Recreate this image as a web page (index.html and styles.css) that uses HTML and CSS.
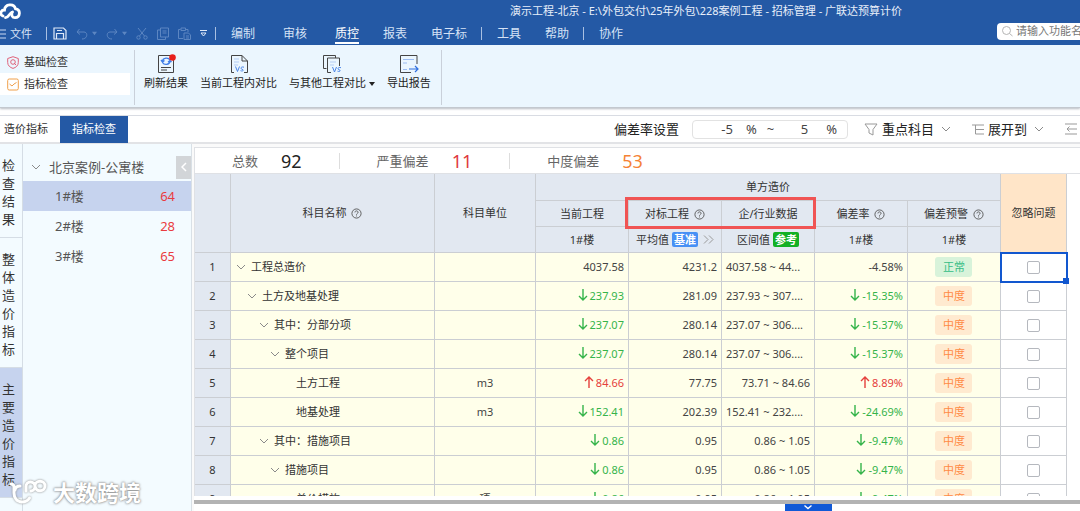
FILE: index.html
```html
<!DOCTYPE html>
<html lang="zh-CN">
<head>
    <meta charset="UTF-8">
    <meta name="viewport" content="width=device-width, initial-scale=1.0">
    <title>广联达预算计价</title>
    <link rel="stylesheet" href="styles.css">
</head>
<body>

    <svg class="sprite" aria-hidden="true">
        <symbol id="chevron" viewBox="0 0 10 10"><path d="M1 3l4 4 4-4" fill="none" stroke="currentColor"/></symbol>
        <symbol id="caret" viewBox="0 0 6 6"><path d="M0 1h6L3 5z" fill="currentColor"/></symbol>
        <symbol id="down" viewBox="0 0 10 12"><path d="M5 0v11M1 7l4 4 4-4" fill="none" stroke="currentColor" stroke-width="1.4"/></symbol>
        <symbol id="up" viewBox="0 0 10 12"><path d="M5 12V1M1 5l4-4 4 4" fill="none" stroke="currentColor" stroke-width="1.4"/></symbol>
        <symbol id="help" viewBox="0 0 12 12"><g fill="none" stroke="currentColor"><circle cx="6" cy="6" r="5"/><path d="M4.3 4.8c0-2.2 3.4-2.2 3.4 0C7.7 6 6 6 6 7.3M6 8.2v1"/></g></symbol>
    </svg>

    <div class="app">
        <header class="header">
            <svg class="logo" viewBox="0 0 22 17"><g fill="none" stroke="#fff" stroke-width="2.8" stroke-linecap="round"><path d="M3 13C-.5 11.500.5 7 4.500 7 5 .8 14 0 15.500 5.800c5.500.7 5 8.700-.5 8.900-3 0-3.500-2.200-3-5.200"/><path d="M5.500 14.700c3.500 0 3.500-4.700 7-5.700"/></g></svg>
            <div class="title">演示工程-北京 - E:\外包交付\25年外包\228案例工程 - 招标管理 - 广联达预算计价</div>
            <nav class="menu">
                <button class="file">
                    <svg width="7" height="10" viewBox="0 0 7 10"><path d="M0 1h6M0 5h6M0 9h6" stroke="#c9d9f2"/></svg>文件
                </button>
                <span class="sep"></span>
                <div class="quick">
                    <button class="on" aria-label="保存"><svg width="14" height="13" viewBox="0 0 14 13"><g fill="none" stroke="currentColor" stroke-width="1.200"><path d="M1 1h9.500L13 3.500V12H1zM3.500 12V6.500h7V12M4 3.500h5"/></g></svg></button>
                    <button aria-label="撤销"><svg width="12" height="12" viewBox="0 0 12 12"><path d="M3.500 1L1 4l3 2.500M1.500 4H8c4 0 4 7-2 7" fill="none" stroke="currentColor"/></svg><svg class="tri" width="5" height="5"><use href="#caret"/></svg></button>
                    <button aria-label="恢复"><svg width="12" height="12" viewBox="0 0 12 12"><path d="M8.500 1L11 4 8 6.500M10.500 4H4c-4 0-4 7 2 7" fill="none" stroke="currentColor"/></svg><svg class="tri" width="5" height="5"><use href="#caret"/></svg></button>
                    <button aria-label="剪切"><svg width="12" height="13" viewBox="0 0 12 13"><g fill="none" stroke="currentColor"><path d="M2 1l6.500 8M10 1L3.500 9"/><circle cx="2.500" cy="10.500" r="1.700"/><circle cx="9.500" cy="10.500" r="1.700"/></g></svg></button>
                    <button aria-label="复制"><svg width="12" height="13" viewBox="0 0 12 13"><path d="M3.500 1h8v9h-8zM3.500 3h-3v9.500h8V10M5.500 4h4M5.500 6h4" fill="none" stroke="currentColor"/></svg></button>
                    <button aria-label="粘贴"><svg width="13" height="13" viewBox="0 0 13 13"><path d="M5 11.500H.5v-9h2M8 2.500h2V5M3 1h4.500v2.500H3zM6 6h4.500L12.500 8v4.500H6zM8 9h3M8 11h3" fill="none" stroke="currentColor"/></svg></button>
                    <button class="on" aria-label="更多"><svg width="7" height="7" viewBox="0 0 7 7"><path d="M0 .5h7M1 3h5L3.500 6z" fill="none" stroke="currentColor"/></svg></button>
                </div>
                <span class="sep"></span>
                <div class="links">
                    <a href="#">编制</a>
                    <a href="#">审核</a>
                    <a href="#" class="current">质控</a>
                </div>
                <div class="links close">
                    <a href="#">报表</a>
                    <a href="#">电子标</a>
                </div>
                <span class="sep"></span>
                <div class="links close">
                    <a href="#">工具</a>
                    <a href="#">帮助</a>
                </div>
                <span class="sep"></span>
                <a href="#">协作</a>
                <label class="search">
                    <svg width="11" height="11" viewBox="0 0 11 11"><g fill="none" stroke="#b5b5b5"><circle cx="4.500" cy="4.500" r="4"/><path d="M7.500 7.500L10.500 10"/></g></svg>
                    <input type="text" placeholder="请输入功能名称" aria-label="搜索功能">
                </label>
            </nav>
        </header>

        <section class="ribbon">
            <div class="checks">
                <button>
                    <svg width="12" height="13" viewBox="0 0 12 13"><g fill="none" stroke="#e0627a"><path d="M6 .7l5.300 1.800v4C11.300 9.500 9 11.500 6 12.400 3 11.500.7 9.500.7 6.500v-4z"/><circle cx="6" cy="6" r="2.300"/><path d="M7 7l2 2"/></g></svg>基础检查
                </button>
                <button class="selected">
                    <svg width="12" height="13" viewBox="0 0 12 13"><g fill="none" stroke="#f0a04b"><rect x=".7" y="1" width="10.600" height="11" rx="1.500"/><path d="M2.500 6L5 8l2-2 2.500-1.500"/></g></svg>指标检查
                </button>
            </div>
            <div class="tools">
                <button>
                    <svg width="20" height="20" viewBox="0 0 20 20"><path d="M2.500 1.500h15v17h-15zM5 13.500h10M5 16h6" fill="none" stroke="#444"/><path d="M6.500 7a4 3.500 0 0 1 7.500-1M14 7.500a4 3.500 0 0 1-7.500 1M5 6l1.500 2L8.500 6.500M12 8l2-1.500L15.500 8" fill="none" stroke="#3f7de8" stroke-width="1.300"/><circle cx="16.500" cy="3.500" r="3.300" fill="#e8201c"/></svg>
                    <span>刷新结果</span>
                </button>
                <button>
                    <svg width="20" height="20" viewBox="0 0 20 20"><path d="M5 18.500H2.500v-17H13L18.500 7v11.500H15M13 1.500V7h5.500" fill="none" stroke="#444"/><path d="M5 5h5M5 8h5M5 11h4" stroke="#b4cdf5"/><path d="M6.500 12.500l2 5 2-5M15 13.200c-3-1-4 1.500-2 2s1.500 2.500-1.500 1.500" fill="none" stroke="#4c86e8"/></svg>
                    <span>当前工程内对比</span>
                </button>
                <button>
                    <svg width="20" height="20" viewBox="0 0 20 20"><path d="M4.500 14.500H1.500v-13h12V4M9 18.500H5.500V4h12v8" fill="none" stroke="#444"/><path d="M8 8h6M8 11h4" stroke="#b4cdf5"/><path d="M10.500 13l2 5 2-5M19 13.700c-3-1-4 1.500-2 2s1.500 2.500-1.500 1.500" fill="none" stroke="#4c86e8"/></svg>
                    <span>与其他工程对比 <svg width="6" height="6"><use href="#caret"/></svg></span>
                </button>
                <button>
                    <svg width="20" height="20" viewBox="0 0 20 20"><path d="M18 10V1.500H1.500v17H12" fill="none" stroke="#444"/><path d="M4 5.500h11M4 9h4M4 15.500h4" stroke="#9cbcf2"/><path d="M10 15h9M16 12l3 3-3 3" fill="none" stroke="#2f6fe0" stroke-width="1.200"/></svg>
                    <span>导出报告</span>
                </button>
            </div>
        </section>

        <section class="toolbar">
            <button class="tab">造价指标</button>
            <button class="tab active">指标检查</button>
            <div class="filters">
                <span>偏差率设置</span>
                <div class="range">
                    <input type="text" value="-5" aria-label="偏差率下限"><span>%</span>
                    <span class="tilde">~</span>
                    <input type="text" value="5" aria-label="偏差率上限"><span>%</span>
                </div>
                <button>
                    <svg width="14" height="13" viewBox="0 0 14 13"><path d="M1 1h12L9 6.500V12L5 10V6.500z" fill="none" stroke="#999"/></svg>
                    重点科目
                    <svg class="arrow" width="10" height="10"><use href="#chevron"/></svg>
                </button>
                <button>
                    <svg width="12" height="11" viewBox="0 0 12 11"><path d="M0 1h12M3.500 1v9H12M3.500 5.500H12" fill="none" stroke="#999"/></svg>
                    展开到
                    <svg class="arrow" width="10" height="10"><use href="#chevron"/></svg>
                </button>
                <button aria-label="收起"><svg width="12" height="12" viewBox="0 0 12 12"><path d="M0 1h12M2 6h10M0 11h12M4.500 3.500L2 6l2.500 2.500" fill="none" stroke="#999"/></svg></button>
            </div>
        </section>

        <main class="workspace">
            <nav class="side-tabs">
                <button>检查结果</button>
                <button>整体造价指标</button>
                <button class="active">主要造价指标</button>
            </nav>

            <aside class="tree">
                <div class="tree-head">
                    <svg class="arrow" width="10" height="10"><use href="#chevron"/></svg>
                    <span>北京案例-公寓楼</span>
                    <button class="collapse" aria-label="收起"><svg width="6" height="10" viewBox="0 0 6 10"><path d="M5 1L1 5l4 4" fill="none" stroke="#fff" stroke-width="1.500"/></svg></button>
                </div>
                <a href="#" class="building active"><span>1#楼</span><b>64</b></a>
                <a href="#" class="building"><span>2#楼</span><b>28</b></a>
                <a href="#" class="building"><span>3#楼</span><b>65</b></a>
            </aside>

            <section class="content">
                <div class="summary">
                    <div>总数 <b>92</b></div>
                    <div>严重偏差 <b class="red">11</b></div>
                    <div>中度偏差 <b class="orange">53</b></div>
                </div>

                <div class="grid">
                    <table>
                        <colgroup>
                            <col class="c-no"><col><col class="c-unit">
                            <col class="c-val"><col class="c-val"><col class="c-val"><col class="c-val"><col class="c-val">
                            <col class="c-skip">
                        </colgroup>
                        <thead>
                            <tr class="group">
                                <th rowspan="3"></th>
                                <th rowspan="3">科目名称 <svg class="help"><use href="#help"/></svg></th>
                                <th rowspan="3">科目单位</th>
                                <th colspan="5">单方造价</th>
                                <th rowspan="3" class="skip">忽略问题</th>
                            </tr>
                            <tr>
                                <th>当前工程</th>
                                <th class="marked">对标工程 <svg class="help"><use href="#help"/></svg></th>
                                <th>企/行业数据</th>
                                <th>偏差率 <svg class="help"><use href="#help"/></svg></th>
                                <th>偏差预警 <svg class="help"><use href="#help"/></svg></th>
                            </tr>
                            <tr>
                                <th>1#楼</th>
                                <th>平均值 <span class="badge">基准</span> <svg class="more" width="11" height="9" viewBox="0 0 11 9"><path d="M1 .5l4 4-4 4M6 .5l4 4-4 4" fill="none" stroke="#999"/></svg></th>
                                <th>区间值 <span class="badge green">参考</span></th>
                                <th>1#楼</th>
                                <th>1#楼</th>
                            </tr>
                        </thead>
                        <tbody>
                            <tr>
                                <th>1</th>
                                <td class="name"><svg class="arrow" width="10" height="10"><use href="#chevron"/></svg>工程总造价</td>
                                <td class="unit"></td>
                                <td>4037.58</td>
                                <td>4231.2</td>
                                <td class="cut">4037.58 ~ 44...</td>
                                <td>-4.58%</td>
                                <td class="warn"><span class="tag ok">正常</span></td>
                                <td class="pick focus"><input type="checkbox" aria-label="忽略第1行"></td>
                            </tr>
                            <tr>
                                <th>2</th>
                                <td class="name lv1"><svg class="arrow" width="10" height="10"><use href="#chevron"/></svg>土方及地基处理</td>
                                <td class="unit"></td>
                                <td class="low"><svg><use href="#down"/></svg>237.93</td>
                                <td>281.09</td>
                                <td class="cut">237.93 ~ 307....</td>
                                <td class="low"><svg><use href="#down"/></svg>-15.35%</td>
                                <td class="warn"><span class="tag">中度</span></td>
                                <td class="pick"><input type="checkbox" aria-label="忽略第2行"></td>
                            </tr>
                            <tr>
                                <th>3</th>
                                <td class="name lv2"><svg class="arrow" width="10" height="10"><use href="#chevron"/></svg>其中：分部分项</td>
                                <td class="unit"></td>
                                <td class="low"><svg><use href="#down"/></svg>237.07</td>
                                <td>280.14</td>
                                <td class="cut">237.07 ~ 306....</td>
                                <td class="low"><svg><use href="#down"/></svg>-15.37%</td>
                                <td class="warn"><span class="tag">中度</span></td>
                                <td class="pick"><input type="checkbox" aria-label="忽略第3行"></td>
                            </tr>
                            <tr>
                                <th>4</th>
                                <td class="name lv3"><svg class="arrow" width="10" height="10"><use href="#chevron"/></svg>整个项目</td>
                                <td class="unit"></td>
                                <td class="low"><svg><use href="#down"/></svg>237.07</td>
                                <td>280.14</td>
                                <td class="cut">237.07 ~ 306....</td>
                                <td class="low"><svg><use href="#down"/></svg>-15.37%</td>
                                <td class="warn"><span class="tag">中度</span></td>
                                <td class="pick"><input type="checkbox" aria-label="忽略第4行"></td>
                            </tr>
                            <tr>
                                <th>5</th>
                                <td class="name leaf">土方工程</td>
                                <td class="unit">m3</td>
                                <td class="high"><svg><use href="#up"/></svg>84.66</td>
                                <td>77.75</td>
                                <td>73.71 ~ 84.66</td>
                                <td class="high"><svg><use href="#up"/></svg>8.89%</td>
                                <td class="warn"><span class="tag">中度</span></td>
                                <td class="pick"><input type="checkbox" aria-label="忽略第5行"></td>
                            </tr>
                            <tr>
                                <th>6</th>
                                <td class="name leaf">地基处理</td>
                                <td class="unit">m3</td>
                                <td class="low"><svg><use href="#down"/></svg>152.41</td>
                                <td>202.39</td>
                                <td class="cut">152.41 ~ 232....</td>
                                <td class="low"><svg><use href="#down"/></svg>-24.69%</td>
                                <td class="warn"><span class="tag">中度</span></td>
                                <td class="pick"><input type="checkbox" aria-label="忽略第6行"></td>
                            </tr>
                            <tr>
                                <th>7</th>
                                <td class="name lv2"><svg class="arrow" width="10" height="10"><use href="#chevron"/></svg>其中：措施项目</td>
                                <td class="unit"></td>
                                <td class="low"><svg><use href="#down"/></svg>0.86</td>
                                <td>0.95</td>
                                <td>0.86 ~ 1.05</td>
                                <td class="low"><svg><use href="#down"/></svg>-9.47%</td>
                                <td class="warn"><span class="tag">中度</span></td>
                                <td class="pick"><input type="checkbox" aria-label="忽略第7行"></td>
                            </tr>
                            <tr>
                                <th>8</th>
                                <td class="name lv3"><svg class="arrow" width="10" height="10"><use href="#chevron"/></svg>措施项目</td>
                                <td class="unit"></td>
                                <td class="low"><svg><use href="#down"/></svg>0.86</td>
                                <td>0.95</td>
                                <td>0.86 ~ 1.05</td>
                                <td class="low"><svg><use href="#down"/></svg>-9.47%</td>
                                <td class="warn"><span class="tag">中度</span></td>
                                <td class="pick"><input type="checkbox" aria-label="忽略第8行"></td>
                            </tr>
                            <tr>
                                <th>9</th>
                                <td class="name leaf">单价措施</td>
                                <td class="unit">项</td>
                                <td class="low"><svg><use href="#down"/></svg>0.86</td>
                                <td>0.95</td>
                                <td>0.86 ~ 1.05</td>
                                <td class="low"><svg><use href="#down"/></svg>-9.47%</td>
                                <td class="warn"><span class="tag">中度</span></td>
                                <td class="pick"><input type="checkbox" aria-label="忽略第9行"></td>
                            </tr>
                        </tbody>
                    </table>
                </div>

                <div class="splitter">
                    <button aria-label="展开"><svg width="10" height="7" viewBox="0 0 10 7"><path d="M1.500 1.500L5 4.500l3.500-3" fill="none" stroke="#fff" stroke-width="1.400"/></svg></button>
                </div>
            </section>
        </main>

        <div class="watermark">
            <svg width="38" height="26" viewBox="0 0 38 26"><g fill="none" stroke="#fff" stroke-width="3" stroke-linecap="round"><path d="M2 5c2 0 3 1 3 3v6c0 5 3 9 8 9 3.500 0 6-1.500 7.500-4M6 11c.5-2.500 2-4 5-4"/><path d="M17 12V7.500a4.500 4.500 0 1 1 5 4.500M26 7a5 4.800 0 1 1 5 4.800c-3 0-4.500-2.300-5-4.800"/></g></svg>
            <span>大数跨境</span>
        </div>
    </div>

</body>
</html>
```

FILE: styles.css
```css
*, *::before, *::after {
    box-sizing: border-box;
}
body {
    margin: 0;
    font-family: "Noto Sans", "Noto Sans CJK SC", sans-serif;
    font-size: 11px;
    line-height: 16px;
    color: #333;
    background: #fff;
}
button, input {
    font: inherit;
    color: inherit;
    border: none;
    background: none;
    padding: 0;
    margin: 0;
}
a {
    color: inherit;
    text-decoration: none;
}
b {
    font-weight: normal;
}
svg {
    flex: none;
}
.sprite {
    display: none;
}
.arrow {
    color: #8a8a8a;
}
.app {
    position: relative;
    display: flex;
    flex-direction: column;
    height: 100vh;
    overflow: hidden;
    white-space: nowrap;
}

/* header */
.header {
    position: relative;
    flex: none;
    background: #2459a5;
    color: #d5e2f5;
}
.logo {
    position: absolute;
    top: 3px;
    left: 0;
    width: 22px;
    height: 17px;
}
.title {
    height: 22px;
    padding-left: 332px;
    line-height: 22px;
    text-align: center;
    color: #e8effa;
}
.menu {
    display: flex;
    align-items: center;
    height: 23px;
    font-size: 12px;
}
.file {
    display: flex;
    align-items: center;
    gap: 3px;
    width: 46px;
    font-size: 11px;
}
.sep {
    width: 1px;
    height: 13px;
    margin-right: 15px;
    background: #a9c0e2;
}
.file + .sep {
    margin-right: 6px;
}
.quick {
    display: flex;
    align-items: center;
    gap: 9px;
    width: 162px;
    color: #5c86c2;
}
.quick button {
    display: flex;
    align-items: center;
    gap: 4px;
}
.quick .on {
    color: #dfe9f8;
}
.links {
    display: flex;
    gap: 28px;
    margin-right: 24px;
}
.links.close {
    gap: 24px;
    margin-right: 14px;
}
.current {
    color: #fff;
    box-shadow: 0 2px #fff;
}
.search {
    display: flex;
    align-items: center;
    gap: 3px;
    width: 83px;
    height: 17px;
    margin-left: auto;
    margin-bottom: 5px;
    padding-left: 5px;
    border-radius: 4px 0 0 4px;
    background: #fff;
    overflow: hidden;
}
.search input {
    flex: none;
    width: 90px;
    font-size: 11px;
}
.search input::placeholder {
    color: #777;
}

/* ribbon */
.ribbon {
    display: flex;
    flex: none;
    height: 63px;
    padding-top: 5px;
    background: #ebf6fe;
    border-bottom: 1px solid #c3c8cf;
    box-shadow: 0 1px 2px #b8bcc4;
}
.checks {
    width: 135px;
    height: 55px;
    padding: 1px 4px 0 0;
    border-right: 1px solid #c9d0da;
}
.checks button {
    display: flex;
    align-items: center;
    gap: 5px;
    width: 100%;
    height: 22px;
    padding-left: 7px;
}
.checks .selected {
    background: #fff;
}
.tools {
    display: flex;
    gap: 12px;
    height: 55px;
    padding: 0 10px 0 9px;
    border-right: 1px solid #c9d0da;
}
.tools button {
    display: flex;
    flex-direction: column;
    align-items: center;
    gap: 1px;
    padding-top: 4px;
    color: #222;
}

/* toolbar */
.toolbar {
    display: flex;
    align-items: center;
    flex: none;
    height: 29px;
    margin-top: 7px;
    border-top: 1px solid #d9dce3;
    border-bottom: 2px solid #e2e3e6;
}
.tab {
    height: 27px;
    padding: 0 12px 0 4px;
}
.tab.active {
    width: 68px;
    padding: 0;
    color: #fff;
    background: #2459a5;
}
.filters {
    display: flex;
    align-items: center;
    margin-left: auto;
    padding-right: 3px;
    font-size: 13px;
    color: #222;
}
.filters button {
    display: flex;
    align-items: center;
    gap: 4px;
    margin-left: 21px;
}
.filters .arrow {
    margin-left: 3px;
}
.range {
    display: flex;
    align-items: center;
    width: 156px;
    height: 19px;
    margin-left: 13px;
    margin-right: -5px;
    border: 1px solid #e2e2e2;
    border-radius: 4px;
    color: #444;
}
.range input {
    width: 40px;
    margin-right: 13px;
    text-align: right;
}
.range .tilde {
    margin-left: 10px;
}
.range .tilde + input {
    width: 34px;
    margin-right: 18px;
}

/* workspace */
.workspace {
    display: flex;
    flex: 1;
    min-height: 0;
}
.side-tabs {
    width: 23px;
    border-right: 1px solid #d5dde5;
    background: #f3fbff;
}
.side-tabs button {
    display: block;
    width: 100%;
    padding: 12px 6px 9px 1px;
    border-bottom: 1px solid #d5dde5;
    font-size: 13px;
    line-height: 18px;
    white-space: normal;
    word-break: break-all;
}
.side-tabs .active {
    background: #c6d3ee;
}
.tree {
    width: 169px;
    border-right: 1px solid #d9e0e6;
    background: #f3fbff;
    font-size: 13px;
    color: #555;
}
.tree-head {
    display: flex;
    align-items: center;
    gap: 8px;
    height: 37px;
    padding-left: 8px;
    padding-top: 9px;
}
.collapse {
    display: flex;
    align-items: center;
    justify-content: center;
    width: 15px;
    height: 23px;
    margin-left: auto;
    background: #d2d5d8;
}
.building {
    display: flex;
    align-items: center;
    justify-content: space-between;
    height: 30px;
    padding: 0 16px 0 32px;
}
.building.active {
    background: #c6d3ee;
}
.building b {
    color: #ea3b40;
}
.content {
    display: flex;
    flex-direction: column;
    flex: 1;
    min-width: 0;
    padding: 3px 0 0 2px;
    background: #fafafa;
}
.summary {
    display: flex;
    align-items: center;
    height: 27px;
    border: 1px solid #dfe1e5;
    border-right: none;
    background: #fff;
    font-size: 13px;
    color: #666;
}
.summary div {
    display: flex;
    align-items: center;
    gap: 23px;
    padding: 0 37px;
    border-right: 1px solid #ddd;
}
.summary div:last-child {
    border: none;
}
.summary b {
    font-size: 18px;
    color: #222;
}
.summary .red {
    color: #e0383e;
}
.summary .orange {
    color: #f58235;
}

/* grid */
.grid {
    flex: 1;
    min-height: 0;
    padding-right: 13px;
    border-left: 1px solid #dfe1e5;
    background: #fff;
    overflow: hidden;
}
table {
    width: 100%;
    table-layout: fixed;
    border-collapse: separate;
    border-spacing: 0;
}
.c-no {
    width: 36px;
}
.c-unit {
    width: 101px;
}
.c-val {
    width: 93px;
}
.c-skip {
    width: 66px;
}
th, td {
    padding: 0 4px;
    border-right: 1px solid #cbced3;
    border-bottom: 1px solid #cbced3;
    font-weight: normal;
}
th {
    background: #e2e8f1;
}
thead th {
    height: 26px;
}
.group th {
    height: 27px;
}
th.skip {
    background: #ffe5c8;
}
.help {
    width: 11px;
    height: 11px;
    margin-left: 2px;
    vertical-align: -2px;
    color: #555;
}
/* highlight frame over the two benchmark columns */
.marked {
    position: relative;
}
.marked::after {
    content: "";
    position: absolute;
    z-index: 1;
    top: -4px;
    left: -4px;
    width: 191px;
    height: 32px;
    border: 3px solid #f05454;
}
.badge {
    display: inline-block;
    padding: 0 2px;
    border-radius: 2px;
    font-weight: bold;
    line-height: 15px;
    color: #fff;
    background: #4790f5;
}
.badge.green {
    background: #12b024;
}
.more {
    margin-left: 2px;
}
td {
    height: 29px;
    text-align: right;
    color: #444;
    background: #ffffea;
}
td svg {
    width: 10px;
    height: 12px;
    margin-right: 2px;
    vertical-align: -1px;
}
td.name {
    padding-left: 5px;
    text-align: left;
    color: #333;
}
td.name svg {
    height: 10px;
    margin-right: 5px;
}
td.lv1 {
    padding-left: 16px;
}
td.lv2 {
    padding-left: 28px;
}
td.lv3 {
    padding-left: 39px;
}
td.leaf {
    padding-left: 65px;
}
td.unit, td.warn, td.pick {
    text-align: center;
}
td.cut {
    text-align: left;
}
td.low {
    color: #35b44a;
}
td.high {
    color: #e5403c;
}
.tag {
    display: inline-block;
    width: 37px;
    border-radius: 3px;
    line-height: 20px;
    text-align: center;
    color: #ff8a45;
    background: #ffead0;
}
.tag.ok {
    color: #35bd85;
    background: #d8f3da;
}
td.pick {
    background: #fff;
}
.pick input {
    appearance: none;
    display: block;
    width: 13px;
    height: 13px;
    margin: 0 auto;
    border: 1px solid #b5b8be;
    border-radius: 2px;
    background: #fff;
}
.focus {
    position: relative;
    outline: 2px solid #1257cf;
    outline-offset: -1px;
}
.focus::after {
    content: "";
    position: absolute;
    right: -3px;
    bottom: -3px;
    width: 6px;
    height: 6px;
    background: #1257cf;
}
.splitter {
    height: 15px;
    border-top: 4px solid #fff;
    background: linear-gradient(#b3b3b3 4px, #fff 4px);
    text-align: center;
}
.splitter button {
    display: flex;
    justify-content: center;
    width: 47px;
    height: 7px;
    margin: 4px 0 0 auto;
    margin-right: 28%;
    background: #1159d6;
}

.watermark {
    position: absolute;
    left: 9px;
    bottom: 4px;
    display: flex;
    align-items: center;
    gap: 6px;
    font-size: 22px;
    font-weight: bold;
    line-height: 30px;
    color: #fff;
    text-shadow: 0 0 2px #888, 0 0 3px #999;
}
.watermark svg {
    filter: drop-shadow(0 0 1px #888);
}
```
